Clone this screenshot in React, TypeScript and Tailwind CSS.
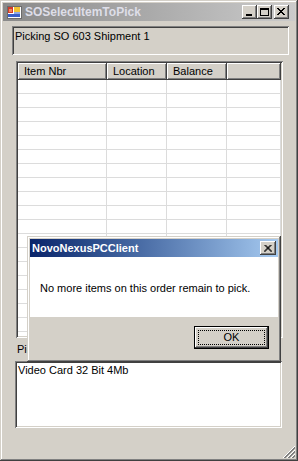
import React from 'react';

const raised =
  'shadow-[inset_-1px_-1px_#404040,inset_1px_1px_#ffffff,inset_-2px_-2px_#808080,inset_2px_2px_#d4d0c8]';
const sunken =
  'shadow-[inset_1px_1px_#808080,inset_-1px_-1px_#ffffff,inset_2px_2px_#404040,inset_-2px_-2px_#d4d0c8]';

function CaptionButton({ kind }: { kind: 'min' | 'max' | 'close' }) {
  return (
    <div className={`w-[15px] h-[14px] bg-[#d4d0c8] flex items-center justify-center ${raised}`}>
      <svg width="9" height="8" viewBox="0 0 9 8" shapeRendering="crispEdges">
        {kind === 'min' && <rect x="1" y="6" width="6" height="2" fill="#000" />}
        {kind === 'max' && (
          <>
            <rect x="0" y="0" width="9" height="2" fill="#000" />
            <rect x="0" y="0" width="1" height="8" fill="#000" />
            <rect x="8" y="0" width="1" height="8" fill="#000" />
            <rect x="0" y="7" width="9" height="1" fill="#000" />
          </>
        )}
        {kind === 'close' && (
          <path d="M1 0 L8 7 M0 0 L7 7 M7 0 L0 7 M8 0 L1 7" stroke="#000" strokeWidth="1" shapeRendering="auto" />
        )}
      </svg>
    </div>
  );
}

function AppIcon() {
  return (
    <svg width="16" height="16" viewBox="0 0 16 16" shapeRendering="crispEdges">
      <rect x="1" y="2" width="14" height="12" fill="#ffffff" stroke="#6b6b6b" />
      <rect x="2" y="3" width="5" height="6" fill="#d23a2a" />
      <rect x="3" y="5" width="3" height="3" fill="#f08a5a" />
      <rect x="8" y="3" width="6" height="5" fill="#f2c230" />
      <rect x="2" y="10" width="12" height="3" fill="#3a5fc8" />
      <rect x="8" y="8" width="6" height="2" fill="#8fa8e8" />
    </svg>
  );
}

// classic size grip: pixel diagonals
function SizeGrip() {
  const px: { x: number; y: number; c: string }[] = [];
  for (const base of [11, 15, 19]) {
    for (let x = 0; x < 12; x++) {
      for (let y = 0; y < 12; y++) {
        const s = x + y;
        if (s === base) px.push({ x, y, c: '#ffffff' });
        else if (s === base + 1 || s === base + 2) px.push({ x, y, c: '#808080' });
      }
    }
  }
  return (
    <svg width="12" height="12" viewBox="0 0 12 12" shapeRendering="crispEdges">
      {px.map((p, i) => (
        <rect key={i} x={p.x} y={p.y} width="1" height="1" fill={p.c} />
      ))}
    </svg>
  );
}

const columns = [
  { label: 'Item Nbr', w: 'w-[89px]' },
  { label: 'Location', w: 'w-[60px]' },
  { label: 'Balance', w: 'w-[60px]' },
];

export default function App() {
  const rows = Array.from({ length: 19 }, (_, i) => i);

  return (
    <div
      className={`relative w-[298px] h-[461px] bg-[#d4d0c8] p-[3px] flex flex-col overflow-hidden text-[11px] text-black font-['Liberation_Sans',Arial,sans-serif] shadow-[inset_-1px_-1px_#404040,inset_1px_1px_#d4d0c8,inset_-2px_-2px_#808080,inset_2px_2px_#ffffff]`}
    >
      {/* Title bar (inactive) */}
      <div className="h-[18px] shrink-0 flex items-center bg-gradient-to-r from-[#8a8a8a] to-[#cbcbcb] pl-[3px] pr-[6px]">
        <AppIcon />
        <span className="ml-[3px] text-[12px] font-bold text-[#dedee8] leading-none">SOSelectItemToPick</span>
        <div className="ml-auto flex items-center">
          <CaptionButton kind="min" />
          <CaptionButton kind="max" />
          <div className="w-[2px]" />
          <CaptionButton kind="close" />
        </div>
      </div>

      {/* Header box */}
      <div className={`mt-[5px] ml-[9px] mr-[6px] h-[29px] shrink-0 bg-[#d4d0c8] pl-[3px] pt-[4px] leading-[13px] ${sunken}`}>
        Picking SO 603 Shipment 1
      </div>

      {/* List view */}
      <div className={`mt-[6px] ml-[13px] mr-[12px] h-[277px] shrink-0 bg-white p-[2px] flex flex-col overflow-hidden ${sunken}`}>
        <div className="flex h-[17px] shrink-0">
          {columns.map((c) => (
            <div key={c.label} className={`${c.w} shrink-0 bg-[#d4d0c8] pl-[6px] leading-[17px] ${raised}`}>
              {c.label}
            </div>
          ))}
          <div className={`flex-1 bg-[#d4d0c8] ${raised}`} />
        </div>
        {rows.map((r) => (
          <div key={r} className="flex h-[14px] shrink-0 border-b border-[#dcdcdc]">
            {columns.map((c) => (
              <div key={c.label} className={`${c.w} shrink-0 border-r border-[#dcdcdc]`} />
            ))}
            <div className="flex-1 border-r border-[#dcdcdc]" />
          </div>
        ))}
      </div>

      {/* Item label */}
      <div className="mt-[4px] ml-[14px] h-[14px] shrink-0 leading-[14px]">Picked Item Description</div>

      {/* Description box */}
      <div className={`mt-[5px] ml-[12px] mr-[13px] h-[67px] shrink-0 bg-white pl-[3px] pt-[3px] leading-[13px] ${sunken}`}>
        Video Card 32 Bit 4Mb
      </div>

      <div className="flex-1 flex items-end justify-end">
        <SizeGrip />
      </div>

      {/* Message box */}
      <div
        className={`absolute left-[27px] top-[236px] w-[254px] h-[126px] bg-[#d4d0c8] p-[3px] flex flex-col shadow-[inset_-1px_-1px_#404040,inset_1px_1px_#d4d0c8,inset_-2px_-2px_#808080,inset_2px_2px_#ffffff]`}
      >
        <div className="h-[18px] shrink-0 flex items-center bg-gradient-to-r from-[#0a246a] to-[#a6caf0] pl-[2px] pr-[2px]">
          <span className="text-[11px] font-bold text-white leading-none">NovoNexusPCClient</span>
          <div className="ml-auto">
            <div className={`w-[16px] h-[14px] bg-[#d4d0c8] flex items-center justify-center ${raised}`}>
              <svg width="8" height="7" viewBox="0 0 8 7">
                <path d="M0.5 0 L7.5 7 M7.5 0 L0.5 7 M1.5 0 L8 6.5 M6.5 0 L0 6.5" stroke="#000" strokeWidth="1" />
              </svg>
            </div>
          </div>
        </div>
        <div className="h-[60px] shrink-0 bg-white pl-[10px] pt-[25px] leading-[13px]">
          No more items on this order remain to pick.
        </div>
        <div className="flex-1 flex justify-end pt-[9px] pr-[9px]">
          <div className="w-[75px] h-[23px] border border-black">
            <div className={`w-full h-full bg-[#d4d0c8] p-[3px] ${raised}`}>
              <div className="w-full h-full border border-dotted border-black flex items-center justify-center leading-none">
                OK
              </div>
            </div>
          </div>
        </div>
      </div>
    </div>
  );
}
